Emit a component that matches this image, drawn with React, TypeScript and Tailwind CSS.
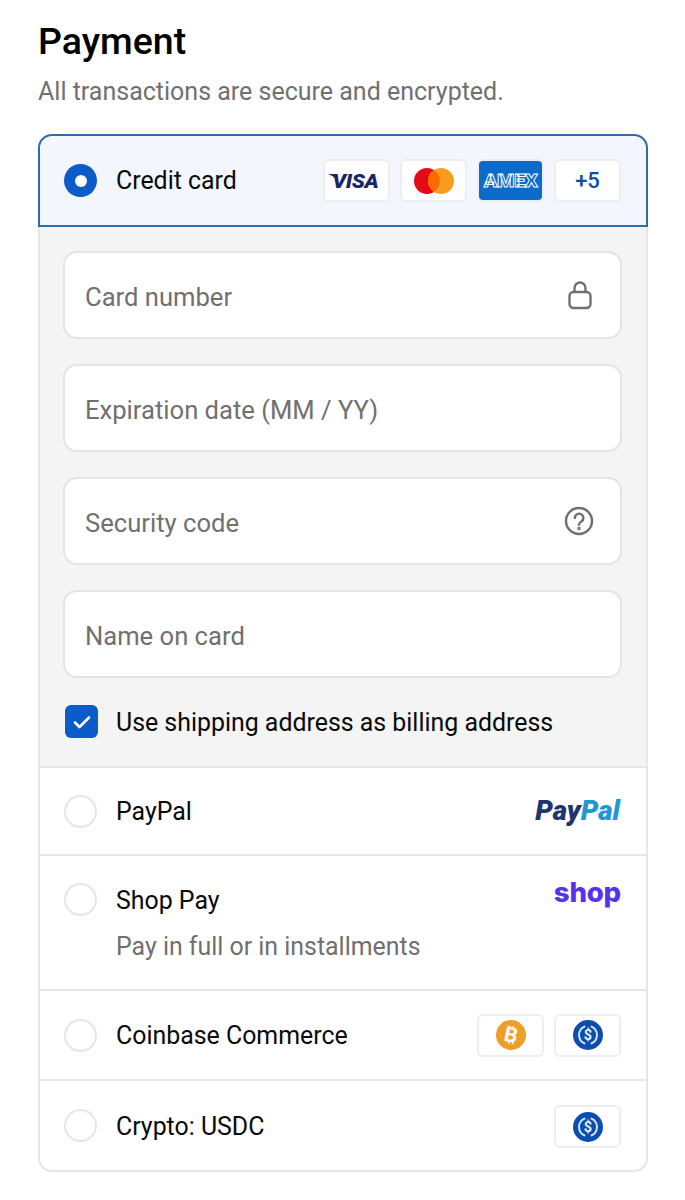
const FONT = "font-['Roboto','Noto_Sans',sans-serif]";

function Badge({ children, className = "" }: { children: React.ReactNode; className?: string }) {
  return (
    <div className={`flex h-[43px] w-[67px] items-center justify-center overflow-hidden rounded-[6px] border-2 border-[#eeeeee] bg-white ${className}`}>
      {children}
    </div>
  );
}

function Radio() {
  return <div className="h-[33px] w-[33px] shrink-0 rounded-full border-2 border-[#e6e6e6] bg-white" />;
}

function Field({ label, children }: { label: string; children?: React.ReactNode }) {
  return (
    <div className="flex h-[88px] items-center justify-between rounded-[14px] border-2 border-[#e4e4e4] bg-white pl-[20px] pr-[26px] text-[25.6px] text-[#707070]">
      <span className="pt-[4px]">{label}</span>
      {children}
    </div>
  );
}

function Usdc() {
  return (
    <svg width="30" height="30" viewBox="0 0 30 30" fill="none">
      <circle cx="15" cy="15" r="15" fill="#0a4fb0" />
      <path d="M11.5 6.6a9.2 9.2 0 0 0 0 16.8M18.5 6.6a9.2 9.2 0 0 1 0 16.8" stroke="#dbe8fb" strokeWidth="1.9" strokeLinecap="round" />
      <text x="15" y="20.2" textAnchor="middle" fontSize="14.5" fontWeight="700" fill="#e6effc" fontFamily="Roboto, sans-serif">$</text>
    </svg>
  );
}

function Bitcoin() {
  return (
    <svg width="30" height="30" viewBox="0 0 30 30">
      <circle cx="15" cy="15" r="15" fill="#ee9f27" />
      <text x="15" y="22" textAnchor="middle" fontSize="21" fontWeight="700" fill="#fff" fontFamily="Roboto, sans-serif" transform="rotate(12 15 15)">B</text>
      <path d="M13.6 5.6l-.5 2.4M17.4 6.4l-.5 2.4M13.1 21.2l-.5 2.4M16.9 22l-.5 2.4" stroke="#fff" strokeWidth="1.5" />
    </svg>
  );
}

function PaymentRow({ label, sub, right, top = false, h }: { label: string; sub?: string; right?: React.ReactNode; top?: boolean; h: string }) {
  return (
    <div className={`flex ${h} ${top ? "items-start" : "items-center"} justify-between border-t-2 border-[#e6e6e6] pl-[24px] pr-[25px]`}>
      <div className={top ? "pt-[27px]" : ""}>
        <div className="flex items-center gap-[19px]">
          <Radio />
          <span className="pt-[2px] text-[24.9px] leading-[30px] text-[#0a0a0a]">{label}</span>
        </div>
        {sub && <div className="ml-[52px] mt-[16px] text-[24.9px] leading-[30px] text-[#707070]">{sub}</div>}
      </div>
      {right}
    </div>
  );
}

export default function App() {
  return (
    <div className={`${FONT} h-[1200px] w-[685px] overflow-hidden bg-white px-[38px] pt-[17px]`}>
      <h1 className="text-[37.5px] font-medium leading-[48px] text-black">Payment</h1>
      <p className="mt-[3px] text-[25px] leading-[48px] text-[#707070]">All transactions are secure and encrypted.</p>

      <div className="mt-[18px] w-[610px]">
        <div className="flex h-[93px] items-center justify-between rounded-t-[14px] border-2 border-[#2d6ca8] bg-[#f4f6fd] pl-[24px] pr-[25px]">
          <div className="flex items-center gap-[19px]">
            <div className="flex h-[33px] w-[33px] items-center justify-center rounded-full bg-[#0b5bc9]">
              <div className="h-[12px] w-[12px] rounded-full bg-white" />
            </div>
            <span className="text-[24.9px] leading-[30px] text-[#0a0a0a]">Credit card</span>
          </div>
          <div className="flex gap-[10px]">
            <Badge>
              <span className="relative mr-[2px] inline-block text-[20px] font-black italic leading-none tracking-[-0.3px] text-[#1a2566] [transform:scaleX(1.08)]">
                <svg width="8" height="6" viewBox="0 0 8 6" className="absolute left-[-4px] top-[3px]">
                  <path d="M0 0h6l2 6C6 3 3 1 0 0z" fill="#1a2566" />
                </svg>
                VISA
              </span>
            </Badge>
            <Badge>
              <svg width="40" height="26" viewBox="0 0 40 26">
                <circle cx="13" cy="13" r="13" fill="#e60a17" />
                <circle cx="27" cy="13" r="13" fill="#f99d1f" />
                <path d="M20 2.1a13 13 0 0 1 0 21.8a13 13 0 0 1 0-21.8z" fill="#ff6a00" />
              </svg>
            </Badge>
            <Badge className="border-[#e8eef6] !bg-[#0a6bcb]">
              <span className="text-[19px] font-black leading-none tracking-[-0.3px] text-[#0a6bcb] [-webkit-text-stroke:0.9px_#ffffff] [transform:scaleX(1.05)]">AMEX</span>
            </Badge>
            <Badge>
              <span className="text-[22px] font-medium leading-none text-[#0f4fa8]">+5</span>
            </Badge>
          </div>
        </div>

        <div className="border-x-2 border-[#e6e6e6] bg-[#f4f4f4] pb-[28px] pl-[23px] pr-[24px] pt-[24px]">
          <div className="flex flex-col gap-[25px]">
            <Field label="Card number">
              <svg width="26" height="30" viewBox="0 0 26 30" fill="none" stroke="#6f6f6f" strokeWidth="2.4" className="mr-[1px]">
                <path d="M7.5 12V8a5.5 5.5 0 0 1 11 0v4" />
                <rect x="2.5" y="12" width="21" height="16" rx="4" />
              </svg>
            </Field>
            <Field label="Expiration date (MM / YY)" />
            <Field label="Security code">
              <svg width="30" height="30" viewBox="0 0 30 30" fill="none" stroke="#6f6f6f" strokeWidth="2.4" strokeLinecap="round">
                <circle cx="15" cy="15" r="13" />
                <path d="M10.8 12a4.3 4.3 0 1 1 6.6 3.6c-1.6 1-2.4 1.7-2.4 3.2" />
                <circle cx="15" cy="22.6" r="0.6" fill="#6f6f6f" />
              </svg>
            </Field>
            <Field label="Name on card" />
          </div>
          <div className="mt-[27px] flex items-center gap-[18px] pl-[2px]">
            <div className="flex h-[33px] w-[33px] items-center justify-center rounded-[6px] bg-[#0b5bc9]">
              <svg width="20" height="16" viewBox="0 0 20 16" fill="none" stroke="#fff" strokeWidth="2.6" strokeLinecap="round" strokeLinejoin="round">
                <path d="M3 8.5l4.5 4.5L17 3.5" />
              </svg>
            </div>
            <span className="pt-[2px] text-[24.9px] leading-[30px] text-[#0a0a0a]">Use shipping address as billing address</span>
          </div>
        </div>

        <div className="rounded-b-[14px] border-x-2 border-b-2 border-[#e6e6e6] bg-white">
          <PaymentRow
            label="PayPal"
            h="h-[88px]"
            right={
              <span className="mr-[1px] text-[27.8px] font-black italic leading-none">
                <span className="text-[#1f3470]">Pay</span>
                <span className="text-[#1e97d4]">Pal</span>
              </span>
            }
          />
          <PaymentRow
            label="Shop Pay"
            sub="Pay in full or in installments"
            h="h-[135px]"
            top
            right={<span className="mt-[19px] font-['Inter',sans-serif] text-[27.6px] font-extrabold leading-[34px] tracking-[-0.2px] text-[#5433eb]">shop</span>}
          />
          <PaymentRow
            label="Coinbase Commerce"
            h="h-[90px]"
            right={
              <div className="flex gap-[10px]">
                <Badge><Bitcoin /></Badge>
                <Badge><Usdc /></Badge>
              </div>
            }
          />
          <PaymentRow label="Crypto: USDC" h="h-[91px]" right={<Badge className="mt-[2px]"><Usdc /></Badge>} />
        </div>
      </div>
    </div>
  );
}
